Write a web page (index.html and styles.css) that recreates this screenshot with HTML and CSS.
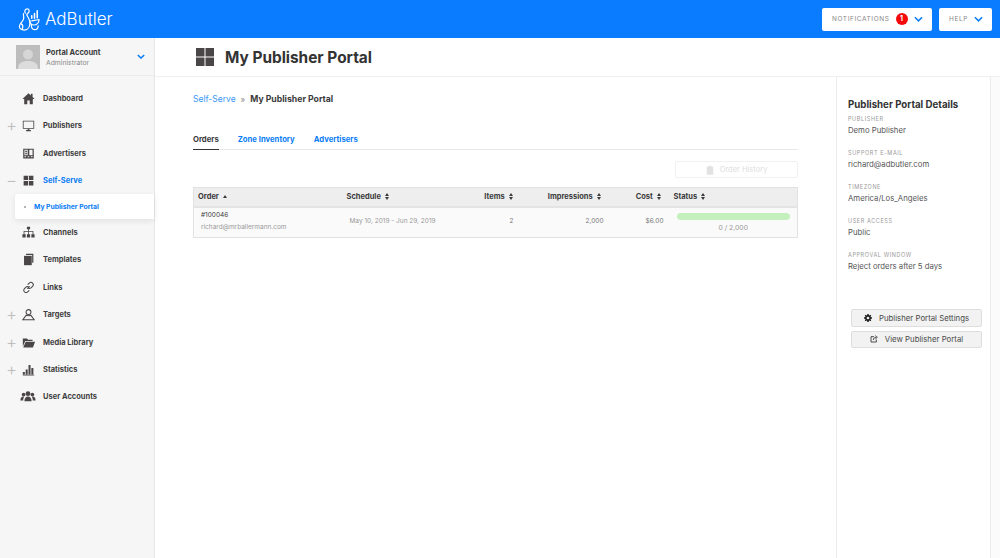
FILE: index.html
```html
<!DOCTYPE html>
<html lang="en">
<head>
    <meta charset="UTF-8" />
    <meta name="viewport" content="width=device-width, initial-scale=1.0" />
    <title>My Publisher Portal - AdButler</title>
    <link rel="stylesheet" href="styles.css">
</head>
<body>
    <!-- Top bar -->
    <header class="topbar">
        <a class="logo">
            <svg class="logo-mark" viewBox="0 0 24 25" width="22" height="23" fill="none" stroke="#fff" stroke-width="1.300" stroke-linecap="round" stroke-linejoin="round">
                <path d="M8 5.500C6.500 3.500 8 1 10 1c2.500 0 3 3 1 4.500L9.500 7c1 3 3.500 5 3.500 9 0 4-2 8-6 8-3 0-5.500-1.500-5.500-4 0-3 3.500-4.500 4.500-8 .8-2.500-.5-4.500 0-6"/>
                <path d="M3 17c2 1 3 3 1.500 6.500"/>
                <path d="M13 13.500c0 3 2 5 4.500 5s5.500-2 5.500-6l-8 1.500"/>
                <path d="M14.500 18c0 3 .5 5.500 3.500 5.500 2.500 0 4-1.500 4-4"/>
                <path d="M15 11V8.500M18 11V6M21 10.500V3" stroke-width="1.700"/>
            </svg>
            <span class="logo-text">AdButler</span>
        </a>
        <div class="top-actions">
            <button class="top-btn top-btn-notify">
                NOTIFICATIONS <span class="badge">1</span>
                <svg class="chev" viewBox="0 0 10 6" width="9" height="6"><path d="M1 1l4 4 4-4" fill="none" stroke="#0a7cf5" stroke-width="1.700"/></svg>
            </button>
            <button class="top-btn top-btn-help">
                HELP
                <svg class="chev" viewBox="0 0 10 6" width="9" height="6"><path d="M1 1l4 4 4-4" fill="none" stroke="#0a7cf5" stroke-width="1.700"/></svg>
            </button>
        </div>
    </header>

    <div class="layout">
        <!-- Sidebar -->
        <aside class="sidebar">
            <div class="account">
                <svg class="avatar" viewBox="0 0 24 24" width="24" height="24">
                    <rect width="24" height="24" fill="#bdbdbd"/>
                    <circle cx="12" cy="9.500" r="5" fill="#d6d6d6"/>
                    <path d="M2 24c0-6 4-8 10-8s10 2 10 8z" fill="#dcdcdc"/>
                </svg>
                <div class="account-text">
                    <div class="account-name">Portal Account</div>
                    <div class="account-role">Administrator</div>
                </div>
                <svg class="account-chev" viewBox="0 0 10 6" width="8" height="5"><path d="M1 1l4 4 4-4" fill="none" stroke="#0a7cf5" stroke-width="1.800"/></svg>
            </div>
            <nav class="menu">
                <a class="menu-item">
                    <span class="toggle"></span>
                    <svg class="menu-icon" viewBox="0 0 16 16"><path d="M8 1.500L.5 8.500h2.200V15h3.800v-4.500h3V15h3.800V8.500h2.200L13 6V2h-2v2.200z"/></svg>
                    Dashboard
                </a>
                <a class="menu-item">
                    <span class="toggle">+</span>
                    <svg class="menu-icon" viewBox="0 0 16 16"><path d="M1 2h14v10H1zM2 3v8h12V3zM5 13.500h6V15H5z" fill-rule="evenodd"/><path d="M7 12h2v2H7z"/></svg>
                    Publishers
                </a>
                <a class="menu-item">
                    <span class="toggle"></span>
                    <svg class="menu-icon" viewBox="0 0 16 16"><path d="M1.500 2h13v12h-13zM3 3.500V10h4V3.500zm6 0V10h4V3.500zM3 11.500v1h2v-1zm4 0v1h2v-1zm4 0v1h2v-1z" fill-rule="evenodd"/><path d="M4 4.500h2v2H4zM4 7.500h2V9H4z"/></svg>
                    Advertisers
                </a>
                <a class="menu-item is-active">
                    <span class="toggle">&minus;</span>
                    <svg class="menu-icon" viewBox="0 0 16 16"><path d="M2 2h5.500v5.500H2zM8.500 2H14v5.500H8.500zM2 8.500h5.500V14H2zM8.500 8.500H14V14H8.500z"/></svg>
                    Self-Serve
                </a>
                <a class="submenu-item"><span class="sub-dot"></span>My Publisher Portal</a>
                <a class="menu-item">
                    <span class="toggle"></span>
                    <svg class="menu-icon" viewBox="0 0 16 16"><path d="M6 1h4v3H8.500v2H14v4h1.500v4h-4v-4H13V7H8.500v3H10v4H6v-4h1.500V7H3v3h1.500v4h-4v-4H2V6h5.500V4H6z"/></svg>
                    Channels
                </a>
                <a class="menu-item">
                    <span class="toggle"></span>
                    <svg class="menu-icon" viewBox="0 0 16 16"><path d="M5 1h9v11h-1.500V2.500H5z"/><path d="M2.500 3.500H12V15H2.500z"/></svg>
                    Templates
                </a>
                <a class="menu-item">
                    <span class="toggle"></span>
                    <svg class="menu-icon menu-icon-line" viewBox="0 0 16 16"><path d="M6.500 9.500l3-3M7 4.500l2-2a2.800 2.800 0 014 4l-2 2a2.800 2.800 0 01-3 .5M9 11.500l-2 2a2.800 2.800 0 01-4-4l2-2a2.800 2.800 0 013-.5"/></svg>
                    Links
                </a>
                <a class="menu-item">
                    <span class="toggle">+</span>
                    <svg class="menu-icon menu-icon-line" viewBox="0 0 16 16"><circle cx="8" cy="5" r="3"/><path d="M5.500 8.500L1 14.500h14l-4.500-6M5.500 8.500c1 1.500 4 1.500 5 0"/></svg>
                    Targets
                </a>
                <a class="menu-item">
                    <span class="toggle">+</span>
                    <svg class="menu-icon" viewBox="0 0 16 16"><path d="M1 3h5l1.500 1.500H13V6H4L1 13z"/><path d="M4.500 7H16l-2.500 7H1.500z"/></svg>
                    Media Library
                </a>
                <a class="menu-item">
                    <span class="toggle">+</span>
                    <svg class="menu-icon" viewBox="0 0 16 16"><path d="M1 11h2.500v3H1zM4.500 8H7v6H4.500zM8 2.500h2.500V14H8zM11.500 6H14v8h-2.500zM1 14.500h14v.8H1z"/></svg>
                    Statistics
                </a>
                <a class="menu-item">
                    <span class="toggle"></span>
                    <svg class="menu-icon menu-icon-wide" viewBox="0 0 20 16"><circle cx="10" cy="4.500" r="3"/><circle cx="4.500" cy="5.500" r="2.300"/><circle cx="15.500" cy="5.500" r="2.300"/><path d="M5.500 14c0-4 2-6 4.500-6s4.500 2 4.500 6zM.5 13c0-3 1.500-5 3.500-5 .7 0 1 .2 1.300.4C4.500 9.500 4 11 4 13zM19.500 13c0-3-1.500-5-3.500-5-.7 0-1 .2-1.300.4.800 1.100 1.300 2.600 1.300 4.600z"/></svg>
                    User Accounts
                </a>
            </nav>
        </aside>

        <div class="page">
            <div class="page-header">
                <svg class="page-icon" viewBox="0 0 18 18" width="18" height="18"><path d="M0 0h8.500v8.500H0zM9.500 0H18v8.500H9.500zM0 9.500h8.500V18H0zM9.500 9.500H18V18H9.500z"/></svg>
                <h1>My Publisher Portal</h1>
            </div>
            <div class="page-body">
                <main class="content">
                    <div class="breadcrumb">
                        <a>Self-Serve</a><span class="crumb-sep">&raquo;</span><strong>My Publisher Portal</strong>
                    </div>
                    <div class="tabs">
                        <a class="tab is-current">Orders</a>
                        <a class="tab">Zone Inventory</a>
                        <a class="tab">Advertisers</a>
                    </div>
                    <div class="table-tools">
                        <button class="history-btn">
                            <svg viewBox="0 0 10 12" width="8" height="10"><path d="M3 1h1a1 1 0 012 0h1v1h2v10H1V2h2z" fill="#e2e2e2"/></svg>
                            Order History
                        </button>
                    </div>
                    <table class="orders">
                        <thead>
                            <tr>
                                <th class="col-order">Order <span class="sort sort-up"></span></th>
                                <th class="col-schedule">Schedule <span class="sort"></span></th>
                                <th class="col-items num">Items <span class="sort"></span></th>
                                <th class="col-impressions num">Impressions <span class="sort"></span></th>
                                <th class="col-cost num">Cost <span class="sort"></span></th>
                                <th class="col-status">Status <span class="sort"></span></th>
                            </tr>
                        </thead>
                        <tbody>
                            <tr>
                                <td class="cell-order">
                                    <div class="order-id">#100046</div>
                                    <div class="order-mail">richard@mrballermann.com</div>
                                </td>
                                <td class="cell-schedule">May 10, 2019 - Jun 29, 2019</td>
                                <td class="num">2</td>
                                <td class="num">2,000</td>
                                <td class="num">$6.00</td>
                                <td class="cell-status">
                                    <div class="progress"></div>
                                    <div class="progress-label">0 / 2,000</div>
                                </td>
                            </tr>
                        </tbody>
                    </table>
                </main>

                <aside class="details">
                    <h2>Publisher Portal Details</h2>
                    <div class="detail">
                        <div class="detail-label">Publisher</div>
                        <div class="detail-value">Demo Publisher</div>
                    </div>
                    <div class="detail">
                        <div class="detail-label">Support E-mail</div>
                        <div class="detail-value">richard@adbutler.com</div>
                    </div>
                    <div class="detail">
                        <div class="detail-label">Timezone</div>
                        <div class="detail-value">America/Los_Angeles</div>
                    </div>
                    <div class="detail">
                        <div class="detail-label">User Access</div>
                        <div class="detail-value">Public</div>
                    </div>
                    <div class="detail">
                        <div class="detail-label">Approval Window</div>
                        <div class="detail-value">Reject orders after 5 days</div>
                    </div>
                    <div class="detail-actions">
                        <button class="side-btn">
                            <svg viewBox="0 0 12 12" width="8" height="8"><path d="M5 0h2l.3 1.600 1.100.5L9.800 1.200l1 1-.9 1.400.5 1.100L12 5v2l-1.600.3-.5 1.100.9 1.400-1 1-1.400-.9-1.100.5L7 12H5l-.3-1.600-1.100-.5-1.400.9-1-1 .9-1.400-.5-1.100L0 7V5l1.600-.3.5-1.100-.9-1.400 1-1 1.400.9 1.100-.5zM6 4a2 2 0 100 4 2 2 0 000-4z" fill="#222" fill-rule="evenodd"/></svg>
                            Publisher Portal Settings
                        </button>
                        <button class="side-btn">
                            <svg viewBox="0 0 12 12" width="8" height="8" fill="none" stroke="#333" stroke-width="1.300"><path d="M6 2.500H1.500v8h8V7M5 7.500C5 5 7 3.500 9 3.500M8 1l3 2.500L8 6"/></svg>
                            View Publisher Portal
                        </button>
                    </div>
                </aside>
                <div class="edge"></div>
            </div>
        </div>
    </div>
</body>
</html>
```

FILE: styles.css
```css
* {
    box-sizing: border-box;
}

html, body {
    height: 100%;
}

body {
    margin: 0;
    overflow: hidden;
    background: #fff;
    color: #3a3a3c;
    font-family: Inter, "Noto Sans", sans-serif;
    font-size: 8px;
}

a {
    text-decoration: none;
}

button {
    font-family: inherit;
    cursor: pointer;
}

/* Top bar */
.topbar {
    display: flex;
    align-items: center;
    justify-content: space-between;
    height: 38px;
    padding: 0 8px 0 18px;
    background: #0a7cff;
}

.logo {
    display: flex;
    align-items: center;
    gap: 5px;
    color: #fff;
}

.logo-text {
    font-size: 17px;
    font-weight: 300;
}

.top-actions {
    display: flex;
    gap: 7px;
}

.top-btn {
    display: flex;
    align-items: center;
    height: 23px;
    padding: 0 0 0 10px;
    border: 0;
    border-radius: 2px;
    background: #fff;
    color: #888;
    font-size: 6.500px;
    letter-spacing: 0.6px;
}

.top-btn-notify {
    width: 110px;
}

.top-btn-help {
    width: 53px;
}

.badge {
    display: inline-block;
    width: 12px;
    height: 12px;
    margin: 0 6px 0 6px;
    border-radius: 50%;
    background: #f40a0a;
    color: #fff;
    font-size: 7px;
    font-weight: 700;
    letter-spacing: 0;
    line-height: 12px;
    text-align: center;
}

.top-btn-help .chev {
    margin-left: 6px;
}

/* Layout */
.layout {
    display: flex;
    height: 520px;
}

.sidebar {
    flex: none;
    width: 155px;
    background: #f6f6f6;
    border-right: 1px solid #e6e6e6;
}

.account {
    display: flex;
    align-items: center;
    height: 38px;
    padding: 0 9px 0 16px;
    border-bottom: 1px solid #ececec;
}

.account-text {
    flex: 1;
    margin-left: 6px;
}

.account-name {
    color: #3a3a3c;
    font-size: 7.500px;
    font-weight: 700;
    line-height: 11px;
}

.account-role {
    color: #8b8b8b;
    font-size: 6.800px;
    line-height: 9px;
}

.menu {
    padding-top: 8.800px;
}

.menu-item {
    display: flex;
    align-items: center;
    height: 27.400px;
    color: #3f3f41;
    font-size: 7.500px;
    font-weight: 700;
}

.menu-item.is-active {
    color: #0a7cf5;
}

.toggle {
    width: 22px;
    padding-left: 6px;
    color: #bdbdbd;
    font-size: 17px;
    font-weight: 300;
    line-height: 1;
}

.menu-icon {
    flex: none;
    width: 13px;
    height: 13px;
    margin-right: 8px;
    fill: #4a4648;
}

.menu-icon-line {
    fill: none;
    stroke: #4a4648;
    stroke-width: 1.300;
}

.menu-icon-wide {
    width: 16px;
    margin-left: -2px;
    margin-right: 7px;
}

.submenu-item {
    display: flex;
    align-items: center;
    height: 24.500px;
    margin-left: 15px;
    border-radius: 2px 0 0 2px;
    background: #fff;
    box-shadow: 0 2px 6px rgba(0,0,0,0.09);
    color: #0a7cf5;
    font-size: 6.800px;
    font-weight: 700;
}

.sub-dot {
    width: 2px;
    height: 2px;
    margin: 0 8px 0 9px;
    background: #b5b5b5;
}

/* Page */
.page {
    display: flex;
    flex: 1;
    flex-direction: column;
    min-width: 0;
}

.page-header {
    display: flex;
    align-items: center;
    flex: none;
    height: 39px;
    padding-left: 41px;
    border-bottom: 1px solid #efefef;
}

.page-icon {
    fill: #4a4648;
}

.page-header h1 {
    margin: 0 0 0 11px;
    color: #333;
    font-size: 15.400px;
    font-weight: 700;
}

.page-body {
    display: flex;
    flex: 1;
}

.content {
    flex: none;
    width: 681px;
    padding: 16px 38px 0 38px;
}

.breadcrumb {
    display: flex;
    align-items: center;
    height: 12px;
    font-size: 8.500px;
}

.breadcrumb a {
    color: #3b98f5;
}

.breadcrumb strong {
    color: #3a3a3c;
    font-size: 8.700px;
}

.crumb-sep {
    margin: 0 5px;
    color: #888;
    font-size: 8px;
}

.tabs {
    display: flex;
    gap: 19px;
    height: 21px;
    margin-top: 24px;
    border-bottom: 1px solid #e8e8e8;
}

.tab {
    height: 21px;
    padding-top: 6px;
    color: #0a7cf5;
    font-size: 7.700px;
    font-weight: 700;
}

.tab.is-current {
    border-bottom: 1.500px solid #333;
    color: #3a3a3c;
}

.table-tools {
    display: flex;
    justify-content: flex-end;
    margin-top: 11px;
}

.history-btn {
    display: flex;
    align-items: center;
    justify-content: center;
    gap: 6px;
    width: 123px;
    height: 17px;
    border: 1px solid #f1f1f1;
    border-radius: 2px;
    background: #fff;
    color: #dedede;
    font-size: 7.500px;
}

/* Orders table */
.orders {
    width: 605px;
    margin-top: 9px;
    border: 1px solid #e2e2e2;
    border-collapse: collapse;
    table-layout: fixed;
}

.orders th {
    height: 19px;
    padding: 0 5px 0 4px;
    background: #eee;
    border-bottom: 2px solid #e4e4e4;
    color: #3a3a3c;
    font-size: 7.500px;
    font-weight: 700;
    text-align: left;
}

.orders td {
    height: 31px;
    padding: 0 5px 2px;
    background: #fafafa;
    color: #777;
    font-size: 6.500px;
}

.orders .num {
    text-align: right;
}

.orders .col-impressions,
.orders .col-cost {
    padding-right: 7px;
}

.orders .col-status {
    padding-left: 5px;
}

.col-order {
    width: 149px;
}

.col-schedule {
    width: 118px;
}

.col-items {
    width: 58px;
}

.col-impressions {
    width: 90px;
}

.col-cost {
    width: 60px;
}

.sort {
    display: inline-block;
    position: relative;
    width: 5px;
    height: 7px;
    margin-left: 2px;
    vertical-align: -0.5px;
}

.sort::before,
.sort::after {
    content: "";
    position: absolute;
    left: 0;
    border-left: 2.500px solid transparent;
    border-right: 2.500px solid transparent;
}

.sort::before {
    top: 0;
    border-bottom: 3px solid #3a3a3c;
}

.sort::after {
    bottom: 0;
    border-top: 3px solid #3a3a3c;
}

.sort-up::after {
    display: none;
}

.sort-up::before {
    top: 2px;
}

.orders .cell-order {
    padding-left: 7px;
}

.order-id {
    color: #3a3a3c;
    line-height: 13px;
}

.order-mail {
    color: #999;
    line-height: 11px;
}

.orders .cell-schedule {
    padding-left: 7px;
    color: #999;
}

.orders .cell-status {
    padding: 0 7px 0 8px;
}

.progress {
    height: 7px;
    border-radius: 4px;
    background: #c4f0be;
}

.progress-label {
    margin-top: 3px;
    color: #999;
    font-size: 6.800px;
    line-height: 9px;
    text-align: center;
}

/* Details panel */
.details {
    flex: none;
    width: 154px;
    padding: 21px 8px 0 11px;
    border-left: 1px solid #ececec;
}

.details h2 {
    margin: 0 0 4px;
    color: #333;
    font-size: 9.700px;
    font-weight: 700;
    line-height: 13px;
}

.detail {
    height: 34px;
}

.detail-label {
    color: #9a9a9a;
    font-size: 5.500px;
    letter-spacing: 0.6px;
    line-height: 9px;
    text-transform: uppercase;
}

.detail-value {
    color: #555;
    font-size: 7.750px;
    line-height: 12px;
}

.detail-actions {
    display: flex;
    flex-direction: column;
    gap: 4px;
    margin: 24px 0 0 3px;
}

.side-btn {
    display: flex;
    align-items: center;
    justify-content: center;
    gap: 7px;
    width: 131px;
    height: 17.500px;
    border: 1px solid #dedede;
    border-radius: 2px;
    background: #f2f2f2;
    color: #4a4a4a;
    font-size: 7.800px;
}

.edge {
    flex: 1;
    background: #fbfbfb;
    border-left: 1px solid #ececec;
}
```
